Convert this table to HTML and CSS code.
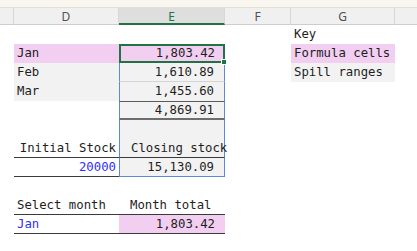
FILE: index.html
```html
<!DOCTYPE html>
<html>
<head>
<meta charset="utf-8">
<link rel="stylesheet" href="styles.css">
</head>
<body>
<div class="topbar"></div>
<div class="sheet">
  <div class="hd"></div><div class="hd">D</div><div class="hd hd-sel">E</div><div class="hd">F</div><div class="hd">G</div><div class="hd hd-last"></div>

  <div class="c"></div><div class="c"></div><div class="c"></div><div class="c"></div><div class="c txt">Key</div><div class="c"></div>

  <div class="c"></div><div class="c txt pink">Jan</div><div class="c num pink active"><span>1,803.42</span><i class="handle"></i></div><div class="c"></div><div class="c txt pink">Formula cells</div><div class="c"></div>

  <div class="c"></div><div class="c txt gray">Feb</div><div class="c num gray spill thin">1,610.89</div><div class="c"></div><div class="c txt gray">Spill ranges</div><div class="c"></div>

  <div class="c"></div><div class="c txt gray">Mar</div><div class="c num gray spill">1,455.60</div><div class="c"></div><div class="c"></div><div class="c"></div>

  <div class="c"></div><div class="c"></div><div class="c num gray spill total">4,869.91</div><div class="c"></div><div class="c"></div><div class="c"></div>

  <div class="c"></div><div class="c"></div><div class="c gray spill"></div><div class="c"></div><div class="c"></div><div class="c"></div>

  <div class="c"></div><div class="c txt right under">Initial Stock</div><div class="c txt gray spill under ind">Closing stock</div><div class="c"></div><div class="c"></div><div class="c"></div>

  <div class="c"></div><div class="c txt right blue under">20000</div><div class="c num gray spill spill-end">15,130.09</div><div class="c"></div><div class="c"></div><div class="c"></div>

  <div class="c"></div><div class="c"></div><div class="c"></div><div class="c"></div><div class="c"></div><div class="c"></div>

  <div class="c"></div><div class="c txt under">Select month</div><div class="c txt under ind">Month total</div><div class="c"></div><div class="c"></div><div class="c"></div>

  <div class="c"></div><div class="c txt blue under">Jan</div><div class="c num pink under">1,803.42</div><div class="c"></div><div class="c"></div><div class="c"></div>

  <div class="c"></div><div class="c"></div><div class="c"></div><div class="c"></div><div class="c"></div><div class="c"></div>
</div>
</body>
</html>
```

FILE: styles.css
```css
html, body {
  margin: 0;
  padding: 0;
  background: #ffffff;
  width: 417px;
  height: 251px;
  overflow: hidden;
}

.topbar {
  height: 7px;
  background: #f8f6ef;
  border-bottom: 1px solid #e4e0d3;
}

.sheet {
  display: grid;
  grid-template-columns: 14px 105px 106px 66px 104px 22px;
  grid-template-rows: 17px repeat(12, 19px);
  font-family: "DejaVu Sans Mono", "Liberation Mono", monospace;
  font-size: 12.3px;
  color: #1e1e1e;
}

.hd {
  box-sizing: border-box;
  background: #f0f0f0;
  border-right: 1px solid #d8d8d8;
  border-bottom: 1px solid #cdcdcd;
  font-family: "Noto Sans", "Open Sans", sans-serif;
  font-size: 12px;
  color: #505050;
  text-align: center;
  line-height: 16px;
  padding-top: 1px;
}

.hd-sel {
  background: #dedede;
  color: #217346;
  border-bottom: 2px solid #217346;
}

.hd-last {
  border-right: none;
}

.c {
  box-sizing: border-box;
  position: relative;
  line-height: 19px;
  white-space: nowrap;
  overflow: visible;
}

.txt {
  padding-left: 3px;
}

.right {
  text-align: right;
  padding-right: 3px;
}

.num {
  text-align: right;
  padding-right: 10px;
}

.ind {
  padding-left: 11px;
  z-index: 1;
}

.pink {
  background: #f2cff0;
}

.gray {
  background: #f2f2f2;
}

.blue {
  color: #2f2fff;
}

.under {
  border-bottom: 1px solid #3a3a3a;
  line-height: 18px;
}

.spill {
  border-left: 1px solid #5b8bd6;
  border-right: 1px solid #5b8bd6;
}

.thin {
  border-bottom: 1px solid #d4d4d4;
  line-height: 18px;
}

.total {
  border-top: 1px solid #5a5a5a;
  border-bottom: 2px solid #6e6e6e;
  line-height: 16px;
}

.spill-end {
  border-bottom: 1px solid #5b8bd6;
  line-height: 18px;
}

.active {
  border: 2px solid #217346;
  line-height: 15px;
  padding-right: 8px;
}

.handle {
  position: absolute;
  right: -4px;
  bottom: -4px;
  width: 6px;
  height: 6px;
  background: #217346;
  border: 1px solid #ffffff;
  box-sizing: border-box;
  z-index: 2;
}
```
